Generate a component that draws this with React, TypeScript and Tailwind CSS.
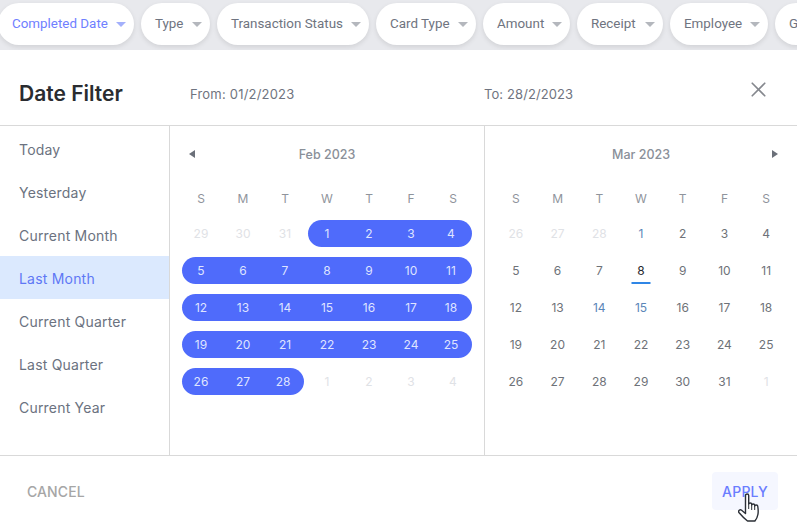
import { FC } from "react";
import { X } from "lucide-react";

const FILTERS = [
  { label: "Completed Date", width: "w-[136px]", active: true },
  { label: "Type", width: "w-[69px]" },
  { label: "Transaction Status", width: "w-[152px]" },
  { label: "Card Type", width: "w-[100px]" },
  { label: "Amount", width: "w-[87px]" },
  { label: "Receipt", width: "w-[86px]" },
  { label: "Employee", width: "w-[98px]" },
  { label: "Group", width: "w-[80px]" },
];

const PRESETS = ["Today", "Yesterday", "Current Month", "Last Month", "Current Quarter", "Last Quarter", "Current Year"];
const WEEK = ["S", "M", "T", "W", "T", "F", "S"];

type Day = { n: number; muted?: boolean };

const toDays = (prev: number[], count: number, next: number[]): Day[] => [
  ...prev.map((n) => ({ n, muted: true })),
  ...Array.from({ length: count }, (_, i) => ({ n: i + 1 })),
  ...next.map((n) => ({ n, muted: true })),
];

const Caret: FC<{ color: string }> = ({ color }) => (
  <svg width="10" height="5" viewBox="0 0 10 5" className="mt-[1px] shrink-0">
    <path d="M0 0h10L5 5z" fill={color} />
  </svg>
);

const Chip: FC<{ label: string; width: string; active?: boolean }> = ({ label, width, active }) => (
  <div
    className={`flex h-[42px] shrink-0 items-center justify-between rounded-[21px] bg-white pl-[14px] pr-[8px] text-[13.4px] shadow-[0_2px_5px_rgba(0,0,0,0.1)] ${width} ${
      active ? "text-[#6f80ff]" : "text-[#6f7480]"
    }`}
  >
    <span className="whitespace-nowrap pt-[1px]">{label}</span>
    <Caret color={active ? "#a3b0fb" : "#b4b7bd"} />
  </div>
);

const Month: FC<{ title: string; days: Day[]; selected?: boolean; side: "left" | "right" }> = ({ title, days, selected, side }) => {
  const rows: Day[][] = [];
  for (let i = 0; i < days.length; i += 7) rows.push(days.slice(i, i + 7));

  return (
    <div className={`h-full px-[10px] ${side === "left" ? "w-[315px] border-r border-[#d9d9d9]" : "w-[312px]"}`}>
      <div className="flex h-[58px] items-center justify-between">
        <svg width="6" height="8" viewBox="0 0 6 8" className={`ml-[9px] mb-[3px] ${side === "left" ? "" : "invisible"}`}>
          <path d="M6 0v8L0 4z" fill="#6b7079" />
        </svg>
        <span className="text-[12.5px] font-medium text-[#8a9099]">{title}</span>
        <svg width="6" height="8" viewBox="0 0 6 8" className={`mr-[9px] mb-[3px] ${side === "right" ? "" : "invisible"}`}>
          <path d="M0 0v8l6-4z" fill="#6b7079" />
        </svg>
      </div>
      <div className="grid h-[29px] grid-cols-7 items-center text-center text-[12px] text-[#8f949c]">
        {WEEK.map((d, i) => (
          <span key={i}>{d}</span>
        ))}
      </div>
      <div className="mt-[2px]">
        {rows.map((row, r) => {
          const first = row.findIndex((d) => !d.muted);
          const last = row.length - 1 - [...row].reverse().findIndex((d) => !d.muted);
          return (
            <div key={r} className="grid h-[37px] grid-cols-7 items-center text-center text-[12px]">
              {row.map((d, i) => {
                const isToday = !selected && !d.muted && d.n === 8;
                if (selected && !d.muted) {
                  return (
                    <div
                      key={i}
                      className={`flex h-[27px] items-center justify-center bg-[#4f6bfb] text-[#dfe4ff] ${
                        i === first ? "ml-[2px] rounded-l-[13.5px] pr-[2px]" : ""
                      } ${i === last ? "mr-[2px] rounded-r-[13.5px] pr-[2px]" : ""}`}
                    >
                      {d.n}
                    </div>
                  );
                }
                const tint = !selected && !d.muted && (d.n === 1 || d.n === 14 || d.n === 15);
                return (
                  <div key={i} className="relative flex h-[27px] items-center justify-center">
                    <span className={d.muted ? "text-[#dfe2e6]" : isToday ? "text-[#26292e]" : tint ? "text-[#5b86b8]" : "text-[#6e7278]"}>{d.n}</span>
                    {isToday && <span className="absolute bottom-0 left-1/2 h-[2px] w-[19px] -translate-x-1/2 bg-[#2f86e6]" />}
                  </div>
                );
              })}
            </div>
          );
        })}
      </div>
    </div>
  );
};

const HandCursor: FC = () => (
  <svg width="24" height="30" viewBox="0 0 24 30" className="absolute left-[738px] top-[493px]">
    <path
      d="M7.500 2.500c0-2 3.200-2 3.200 0V11c0-1.400 3-1.400 3 0v1c0-1.300 3-1.300 3 0v1c0-1.300 3-1.300 3 0 .5 3 .7 6 .2 8.500-.4 2.500-1.400 4.500-3 6.500H9.500C7 26 3 22 .9 19.500c-1-1.500 1-3.600 2.700-2.300l3.900 3.300z"
      fill="#ffffff"
      stroke="#2b2f36"
      strokeWidth="1.4"
      strokeLinejoin="round"
    />
    <path d="M10.700 11v5M13.700 12v5M16.700 13v4" stroke="#2b2f36" strokeWidth="1" fill="none" />
  </svg>
);

export default function App() {
  const feb = toDays([29, 30, 31], 28, [1, 2, 3, 4]);
  const mar = toDays([26, 27, 28], 31, [1]);

  return (
    <div className="relative h-[528px] w-[797px] overflow-hidden bg-white font-['Inter',sans-serif]">
      <div className="flex h-[50px] gap-[7px] overflow-hidden bg-[#e8e9ed] pt-[3px] font-['Roboto',sans-serif]">
        {FILTERS.map((f, i) => (
          <div key={f.label} className={i === 0 ? "-ml-[2px]" : ""}>
            <Chip {...f} />
          </div>
        ))}
      </div>

      <div className="flex h-[76px] items-center border-b border-[#d9d9d9] pt-[13px]">
        <h1 className="ml-[19px] w-[171px] text-[21px] font-semibold text-[#2a2c30]">Date Filter</h1>
        <span className="w-[294px] pt-[2px] text-[13px] tracking-[0.2px] text-[#6f7480]">From: 01/2/2023</span>
        <span className="pt-[2px] text-[13px] tracking-[0.1px] text-[#6f7480]">To: 28/2/2023</span>
        <X className="ml-auto mr-[26px] mb-[9px] text-[#85888e]" size={25} strokeWidth={1.6} />
      </div>

      <div className="flex h-[329px]">
        <ul className="w-[170px] shrink-0 border-r border-[#d9d9d9] pt-[1px]">
          {PRESETS.map((p) => (
            <li
              key={p}
              className={`flex h-[43px] items-center pl-[19px] pt-[1px] text-[14px] tracking-[0.2px] ${p === "Last Month" ? "bg-[#dbe9fe] text-[#5f78f5]" : "text-[#6b7280]"}`}
            >
              {p}
            </li>
          ))}
        </ul>
        <Month title="Feb 2023" days={feb} selected side="left" />
        <Month title="Mar 2023" days={mar} side="right" />
      </div>

      <div className="flex h-[73px] items-center justify-between border-t border-[#d9d9d9] pb-[2px] pl-[27px] pr-[19px]">
        <button className="text-[14px] font-medium tracking-[0.1px] text-[#a6a6a6]">CANCEL</button>
        <button className="h-[38px] w-[66px] rounded-[4px] bg-[#f5f7ff] text-[14px] font-medium tracking-[0.2px] text-[#6a7dff]">APPLY</button>
      </div>

      <HandCursor />
    </div>
  );
}
